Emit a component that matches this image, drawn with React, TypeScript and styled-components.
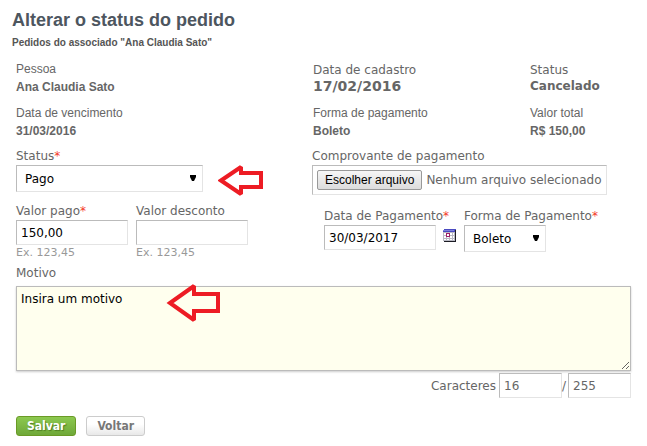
import React, { useState } from "react";
import styled, { createGlobalStyle, css } from "styled-components";

const wide = `"DejaVu Sans", Verdana, sans-serif`;
const narrow = `"Liberation Sans", Arial, sans-serif`;

const GlobalStyle = createGlobalStyle`
  *, *::before, *::after { box-sizing: border-box; }
  body {
    margin: 0;
    background: #fff;
    color: #666;
    font: 12px/16px ${wide};
  }
`;

const Page = styled.main`
  padding: 8px 16px 8px 12px;
`;

const Title = styled.h1`
  margin: 0;
  color: #4d565f;
  font: bold 18px/24px ${narrow};
`;

const Subtitle = styled.h2`
  margin: 4px 0 0;
  color: #555;
  font: bold 10px/14px ${narrow};
`;

const Form = styled.form`
  padding: 10px 0 0 4px;
`;

const Summary = styled.dl`
  display: grid;
  grid-template-columns: 297fr 217fr 101fr;
  row-gap: 8px;
  margin: 0;
`;

const SummaryItem = styled.div<{ $wide?: boolean }>`
  min-width: 0;
  white-space: nowrap;
  font-family: ${(p) => (p.$wide ? wide : narrow)};
  line-height: ${(p) => (p.$wide ? "16px" : "18px")};
  padding-top: ${(p) => (p.$wide ? "2px" : "0")};
`;

const Term = styled.dt``;

const Value = styled.dd<{ $large?: boolean }>`
  margin: 0;
  font-weight: bold;
  font-size: ${(p) => (p.$large ? "14px" : "12px")};
`;

const Columns = styled.div`
  display: grid;
  grid-template-columns: 296fr 319fr;
  margin-top: 8px;
`;

const Stack = styled.div<{ $gap: number }>`
  display: flex;
  flex-direction: column;
  align-items: flex-start;
  gap: ${(p) => p.$gap}px;
`;

const Row = styled.div<{ $gap: number; $indent?: number }>`
  display: flex;
  align-items: flex-start;
  gap: ${(p) => p.$gap}px;
  padding-left: ${(p) => p.$indent ?? 0}px;
`;

const Field = styled.div<{ $width?: number }>`
  display: flex;
  flex-direction: column;
  align-items: flex-start;
  width: ${(p) => (p.$width ? `${p.$width}px` : "auto")};
`;

const Label = styled.label`
  line-height: 16px;
  margin-bottom: 1px;
  white-space: nowrap;
`;

const Required = styled.span`
  color: #f43a2a;
`;

const sunken = css`
  border: 1px solid;
  border-color: #bbb #e4e4e4 #e4e4e4 #bbb;
  border-radius: 0;
  background: #fff;
`;

const TextInput = styled.input<{ $width: number; $muted?: boolean }>`
  ${sunken}
  width: ${(p) => p.$width}px;
  height: 25px;
  margin: 0;
  padding: 0 4px;
  color: ${(p) => (p.$muted ? "#666" : "#000")};
  font: 12px/16px ${wide};
`;

const Hint = styled.small`
  color: #999;
  font-size: 11px;
  line-height: 16px;
`;

const SelectBox = styled.span<{ $width: number }>`
  position: relative;
  display: block;
  width: ${(p) => p.$width}px;
`;

const Select = styled.select`
  ${sunken}
  display: block;
  appearance: none;
  width: 100%;
  height: 27px;
  padding: 0 20px 0 8px;
  color: #000;
  font: 12px/16px ${wide};
`;

const Caret = styled.svg`
  position: absolute;
  right: 7px;
  top: 10px;
  pointer-events: none;
`;

const FileBox = styled.div`
  ${sunken}
  position: relative;
  display: flex;
  align-items: center;
  gap: 4px;
  height: 30px;
  padding: 0 4px;
  white-space: nowrap;
`;

const FileInput = styled.input`
  position: absolute;
  inset: 0;
  width: 100%;
  opacity: 0;
`;

const FileButton = styled.span`
  padding: 0 7px;
  border: 1px solid #999;
  border-radius: 2px;
  background: linear-gradient(#f6f6f6, #dcdcdc);
  color: #000;
  font: 12px/18px ${narrow};
`;

const IconButton = styled.button`
  display: block;
  margin: 20px 0 0;
  padding: 0;
  border: 0;
  background: none;
  line-height: 0;
`;

const Motive = styled.div`
  position: relative;
  margin-top: 4px;
`;

const MotiveLabel = styled(Label)`
  display: block;
  margin-bottom: 5px;
`;

const TextArea = styled.textarea`
  display: block;
  width: 100%;
  height: 85px;
  margin: 0;
  padding: 4px;
  border: 1px solid #bbb;
  border-radius: 0;
  background: #ffffee;
  box-shadow: 0 1px 2px #ccc;
  color: #000;
  font: 12px/16px ${wide};
  resize: both;
`;

const MotivePointer = styled.svg`
  position: absolute;
  left: 150px;
  top: 18px;
  pointer-events: none;
`;

const Counter = styled.div`
  display: flex;
  justify-content: flex-end;
  align-items: center;
  margin-top: 2px;
`;

const CounterLabel = styled.label`
  margin-right: 3px;
`;

const Slash = styled.span`
  width: 6px;
`;

const Actions = styled.div`
  display: flex;
  gap: 10px;
  margin-top: 18px;
`;

const Button = styled.button<{ $primary?: boolean }>`
  height: 20px;
  padding: 0 10px;
  border: 1px solid ${(p) => (p.$primary ? "#6a9a26" : "#ccc")};
  border-radius: 3px;
  background: ${(p) =>
    p.$primary ? "linear-gradient(#8cc84f, #6fa839)" : "linear-gradient(#fff 40%, #e8e8e8)"};
  color: ${(p) => (p.$primary ? "#fff" : "#777")};
  text-shadow: ${(p) => (p.$primary ? "1px 1px 1px #4f7d22" : "none")};
  font: bold 12px/16px "DejaVu Sans Condensed", ${wide};
`;

const statuses = ["Pago", "Cancelado"];
const methods = ["Boleto", "Dinheiro"];

function Dropdown({ id, width, options }: { id: string; width: number; options: string[] }) {
  return (
    <SelectBox $width={width}>
      <Select id={id}>
        {options.map((o) => (
          <option key={o}>{o}</option>
        ))}
      </Select>
      <Caret width="6" height="6" viewBox="0 0 6 6" aria-hidden="true">
        <path d="M0 0H6V2L4 6H2L0 2Z" fill="#000" />
      </Caret>
    </SelectBox>
  );
}

function CalendarIcon() {
  return (
    <svg width="14" height="14" viewBox="0 0 14 14" shapeRendering="crispEdges" aria-hidden="true">
      <path d="M2 2H14V14H2Z" fill="#1c1c24" />
      <path d="M1 4H13V13H1Z" fill="#b9b9c4" />
      <path d="M2 1H14V2H13V4H1V2H2Z" fill="#4a4ac0" />
      <path d="M1 2H12V3H1Z" fill="#7c80dc" />
      <path
        d="M2 5H4V7H2ZM5 5H7V7H5ZM8 5H10V7H8ZM11 5H12V7H11ZM2 8H4V10H2ZM5 8H7V10H5ZM8 8H10V10H8ZM11 8H12V10H11ZM2 11H4V12H2ZM5 11H7V12H5ZM8 11H10V12H8ZM11 11H12V12H11Z"
        fill="#fff"
      />
      <path d="M4.5 5.5H7.5V8.5H4.5Z" stroke="#a0206a" fill="#fff" />
    </svg>
  );
}

export default function App() {
  const [motive, setMotive] = useState("Insira um motivo");
  return (
    <>
      <GlobalStyle />
      <Page>
        <Title>Alterar o status do pedido</Title>
        <Subtitle>Pedidos do associado "Ana Claudia Sato"</Subtitle>
        <Form onSubmit={(e) => e.preventDefault()}>
          <Summary>
            <SummaryItem>
              <Term>Pessoa</Term>
              <Value>Ana Claudia Sato</Value>
            </SummaryItem>
            <SummaryItem $wide>
              <Term>Data de cadastro</Term>
              <Value $large>17/02/2016</Value>
            </SummaryItem>
            <SummaryItem $wide>
              <Term>Status</Term>
              <Value>Cancelado</Value>
            </SummaryItem>
            <SummaryItem>
              <Term>Data de vencimento</Term>
              <Value>31/03/2016</Value>
            </SummaryItem>
            <SummaryItem>
              <Term>Forma de pagamento</Term>
              <Value>Boleto</Value>
            </SummaryItem>
            <SummaryItem>
              <Term>Valor total</Term>
              <Value>R$ 150,00</Value>
            </SummaryItem>
          </Summary>

          <Columns>
            <Stack $gap={7}>
              <Field>
                <Label htmlFor="status">
                  Status<Required>*</Required>
                </Label>
                <Row $gap={15}>
                  <Dropdown id="status" width={187} options={statuses} />
                  <svg width="45" height="31" viewBox="0 0 45 31" aria-hidden="true">
                    <path
                      d="M3 15.5L23 2V8H43V22H23V29Z"
                      fill="none"
                      stroke="#ed1c24"
                      strokeWidth="4"
                      strokeMiterlimit="2"
                    />
                  </svg>
                </Row>
              </Field>
              <Row $gap={8}>
                <Field>
                  <Label htmlFor="paid">
                    Valor pago<Required>*</Required>
                  </Label>
                  <TextInput id="paid" $width={112} defaultValue="150,00" />
                  <Hint>Ex. 123,45</Hint>
                </Field>
                <Field>
                  <Label htmlFor="discount">Valor desconto</Label>
                  <TextInput id="discount" $width={112} />
                  <Hint>Ex. 123,45</Hint>
                </Field>
              </Row>
            </Stack>
            <Stack $gap={13}>
              <Field>
                <Label htmlFor="receipt">Comprovante de pagamento</Label>
                <FileBox>
                  <FileButton>Escolher arquivo</FileButton>
                  <span>Nenhum arquivo selecionado</span>
                  <FileInput id="receipt" type="file" />
                </FileBox>
              </Field>
              <Row $gap={8} $indent={12}>
                <Row $gap={6}>
                  <Field $width={112}>
                    <Label htmlFor="date">
                      Data de Pagamento<Required>*</Required>
                    </Label>
                    <TextInput id="date" $width={112} defaultValue="30/03/2017" />
                  </Field>
                  <IconButton type="button" aria-label="Abrir calendário">
                    <CalendarIcon />
                  </IconButton>
                </Row>
                <Field>
                  <Label htmlFor="method">
                    Forma de Pagamento<Required>*</Required>
                  </Label>
                  <Dropdown id="method" width={82} options={methods} />
                </Field>
              </Row>
            </Stack>
          </Columns>

          <Motive>
            <MotiveLabel htmlFor="motive">Motivo</MotiveLabel>
            <TextArea
              id="motive"
              maxLength={255}
              value={motive}
              onChange={(e) => setMotive(e.target.value)}
            />
            <MotivePointer width="55" height="40" viewBox="0 0 55 40" aria-hidden="true">
              <path
                d="M4 20L28 3V11H52V28H28V37Z"
                fill="none"
                stroke="#ed1c24"
                strokeWidth="4"
                strokeMiterlimit="2"
              />
            </MotivePointer>
          </Motive>

          <Counter>
            <CounterLabel htmlFor="used">Caracteres</CounterLabel>
            <TextInput id="used" $width={63} $muted readOnly value={motive.length} />
            <Slash>/</Slash>
            <TextInput aria-label="Máximo de caracteres" $width={63} $muted readOnly value="255" />
          </Counter>

          <Actions>
            <Button type="submit" $primary>
              Salvar
            </Button>
            <Button type="button">Voltar</Button>
          </Actions>
        </Form>
      </Page>
    </>
  );
}
